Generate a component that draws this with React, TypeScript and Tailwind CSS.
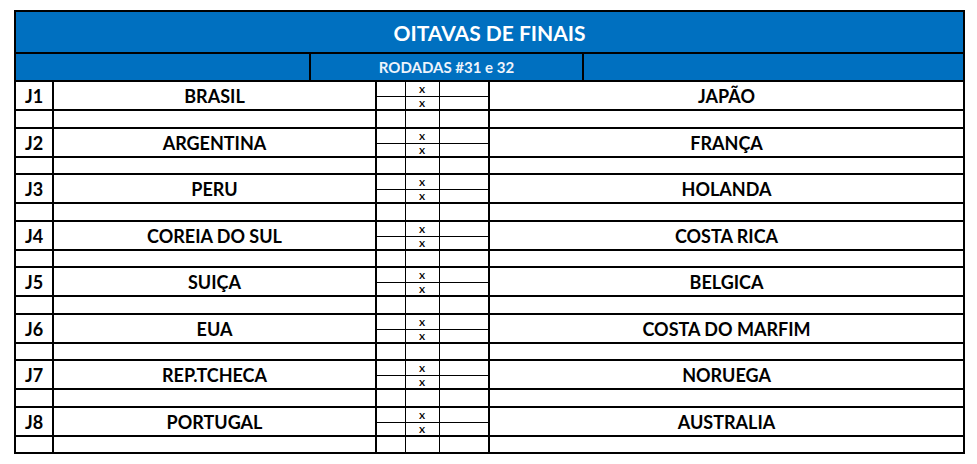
import React from "react";

const games: [string, string, string][] = [
  ["J1", "BRASIL", "JAPÃO"],
  ["J2", "ARGENTINA", "FRANÇA"],
  ["J3", "PERU", "HOLANDA"],
  ["J4", "COREIA DO SUL", "COSTA RICA"],
  ["J5", "SUIÇA", "BELGICA"],
  ["J6", "EUA", "COSTA DO MARFIM"],
  ["J7", "REP.TCHECA", "NORUEGA"],
  ["J8", "PORTUGAL", "AUSTRALIA"],
];

export default function App() {
  return (
    <div className="w-[977px] h-[464px] bg-white pt-[10px] pl-[14px]" style={{ fontFamily: "Lato, 'Open Sans', sans-serif" }}>
      <table className="border-collapse table-fixed w-[951px] text-black">
        <colgroup>
          <col className="w-[38px]" />
          <col className="w-[257px]" />
          <col className="w-[66px]" />
          <col className="w-[29px]" />
          <col className="w-[34px]" />
          <col className="w-[50px]" />
          <col className="w-[94px]" />
          <col className="w-[381px]" />
        </colgroup>
        <tbody>
          <tr className="h-[42px]">
            <td colSpan={8} className="border-2 border-black bg-[#0070c0] text-center text-white font-bold text-[21px] p-0 leading-none">
              OITAVAS DE FINAIS
            </td>
          </tr>
          <tr className="h-[28px]">
            <td colSpan={2} className="border-2 border-black bg-[#0070c0] p-0" />
            <td colSpan={5} className="border-2 border-black bg-[#0070c0] text-center text-[#eef4fb] font-bold text-[15px] p-0 leading-none">
              RODADAS #31 e 32
            </td>
            <td className="border-2 border-black bg-[#0070c0] p-0" />
          </tr>
          {games.map(([j, a, b], i) => (
            <React.Fragment key={j}>
              <tr className="h-[15px]">
                <td rowSpan={2} className="border-2 border-black text-center font-bold text-[18px] p-0 leading-[16px]">
                  {j}
                </td>
                <td colSpan={2} rowSpan={2} className="border-2 border-black text-center font-bold text-[18px] p-0 leading-[16px]">
                  {a}
                </td>
                <td className="border-t-2 border-b border-l-2 border-r border-black p-0" />
                <td className="border-t-2 border-b border-x border-black p-0 text-center text-[12px] font-semibold leading-[9px] align-middle">x</td>
                <td className="border-t-2 border-b border-l border-r-2 border-black p-0" />
                <td colSpan={2} rowSpan={2} className="border-2 border-black text-center font-bold text-[18px] p-0 leading-[16px]">
                  {b}
                </td>
              </tr>
              <tr className="h-[14px]">
                <td className="border-t border-b-2 border-l-2 border-r border-black p-0" />
                <td className="border-t border-b-2 border-x border-black p-0 text-center text-[12px] font-semibold leading-[9px] align-middle">x</td>
                <td className="border-t border-b-2 border-l border-r-2 border-black p-0" />
              </tr>
              <tr className={i % 2 === 0 ? "h-[18px]" : "h-[17px]"}>
                <td className="border-2 border-black p-0" />
                <td colSpan={2} className="border-2 border-black p-0" />
                <td className="border-y-2 border-l-2 border-r border-black p-0" />
                <td className="border-y-2 border-x border-black p-0" />
                <td className="border-y-2 border-l border-r-2 border-black p-0" />
                <td colSpan={2} className="border-2 border-black p-0" />
              </tr>
            </React.Fragment>
          ))}
        </tbody>
      </table>
    </div>
  );
}
